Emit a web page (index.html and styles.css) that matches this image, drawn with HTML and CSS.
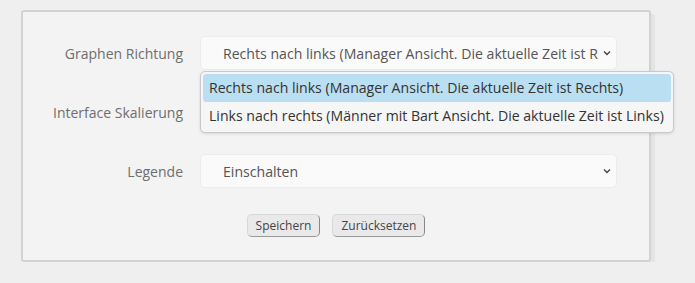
FILE: index.html
```html
<!DOCTYPE html>
<html lang="de">
<head>
    <meta charset="UTF-8">
    <meta name="viewport" content="width=device-width, initial-scale=1.0">
    <title>Einstellungen</title>
    <link rel="stylesheet" href="styles.css">
</head>
<body>
    <div class="panel">
        <div class="form">
            <label class="label">Graphen Richtung</label>
            <div class="field">
                <div class="select">
                    <span class="value">Rechts nach links (Manager Ansicht. Die aktuelle Zeit ist Rechts)</span>
                    <svg class="chevron" width="8" height="6" viewBox="0 0 8 6"><path d="M1 1.5 L4 4.5 L7 1.5" fill="none" stroke="#444" stroke-width="1.4"/></svg>
                </div>
                <ul class="dropdown">
                    <li class="option selected">Rechts nach links (Manager Ansicht. Die aktuelle Zeit ist Rechts)</li>
                    <li class="option">Links nach rechts (Männer mit Bart Ansicht. Die aktuelle Zeit ist Links)</li>
                </ul>
            </div>

            <label class="label">Interface Skalierung</label>
            <div class="field">
                <div class="select">
                    <span class="value"></span>
                    <svg class="chevron" width="8" height="6" viewBox="0 0 8 6"><path d="M1 1.5 L4 4.5 L7 1.5" fill="none" stroke="#444" stroke-width="1.4"/></svg>
                </div>
            </div>

            <label class="label">Legende</label>
            <div class="field">
                <div class="select">
                    <span class="value">Einschalten</span>
                    <svg class="chevron" width="8" height="6" viewBox="0 0 8 6"><path d="M1 1.5 L4 4.5 L7 1.5" fill="none" stroke="#444" stroke-width="1.4"/></svg>
                </div>
            </div>
        </div>

        <div class="buttons">
            <button>Speichern</button>
            <button>Zurücksetzen</button>
        </div>
    </div>
</body>
</html>
```

FILE: styles.css
```css
body {
    margin: 0;
    background-color: #efefef;
    font-family: "Open Sans", sans-serif;
}

.panel {
    box-sizing: border-box;
    margin: 10px 0 0 21px;
    width: 630px;
    height: 252px;
    background-color: #f3f3f3;
    border: 2px solid #d2d2d2;
    border-radius: 3px;
    box-shadow: 4px 4px 0 #e4e4e4;
    padding-top: 24px;
}

.form {
    display: grid;
    grid-template-columns: 160px 417px;
    column-gap: 17px;
    row-gap: 25px;
    align-items: center;
}

.label {
    text-align: right;
    color: #6e6e6e;
    font-size: 14px;
}

.field {
    position: relative;
}

.select {
    box-sizing: border-box;
    height: 34px;
    display: flex;
    align-items: center;
    padding: 0 5px 0 22px;
    background-color: #fafafa;
    border: 1px solid #ececec;
    border-radius: 5px;
    color: #555;
    font-size: 14.1px;
}

.value {
    flex: 1;
    overflow: hidden;
    white-space: nowrap;
}

.chevron {
    margin-left: 5px;
}

.dropdown {
    position: absolute;
    z-index: 2;
    top: 35px;
    left: 0;
    width: 474px;
    box-sizing: border-box;
    margin: 0;
    padding: 2px;
    list-style: none;
    background-color: #f6f6f6;
    border: 1px solid #c9c9c9;
    border-radius: 5px;
    box-shadow: 0 1px 3px rgba(0, 0, 0, 0.12);
}

.option {
    height: 28px;
    line-height: 28px;
    padding-left: 6px;
    color: #333;
    font-size: 14.1px;
    border-radius: 3px;
    white-space: nowrap;
}

.option.selected {
    background-color: #bbdff2;
}

.buttons {
    display: flex;
    justify-content: center;
    gap: 12px;
    margin-top: 26px;
}

button {
    font-family: "Open Sans", sans-serif;
    font-size: 12px;
    color: #444;
    background-color: #e9e9e9;
    border: 1px solid #d8d8d8;
    border-right-color: #888;
    border-bottom-color: #999;
    border-radius: 5px;
    height: 23px;
    padding: 0 8px;
}
```
